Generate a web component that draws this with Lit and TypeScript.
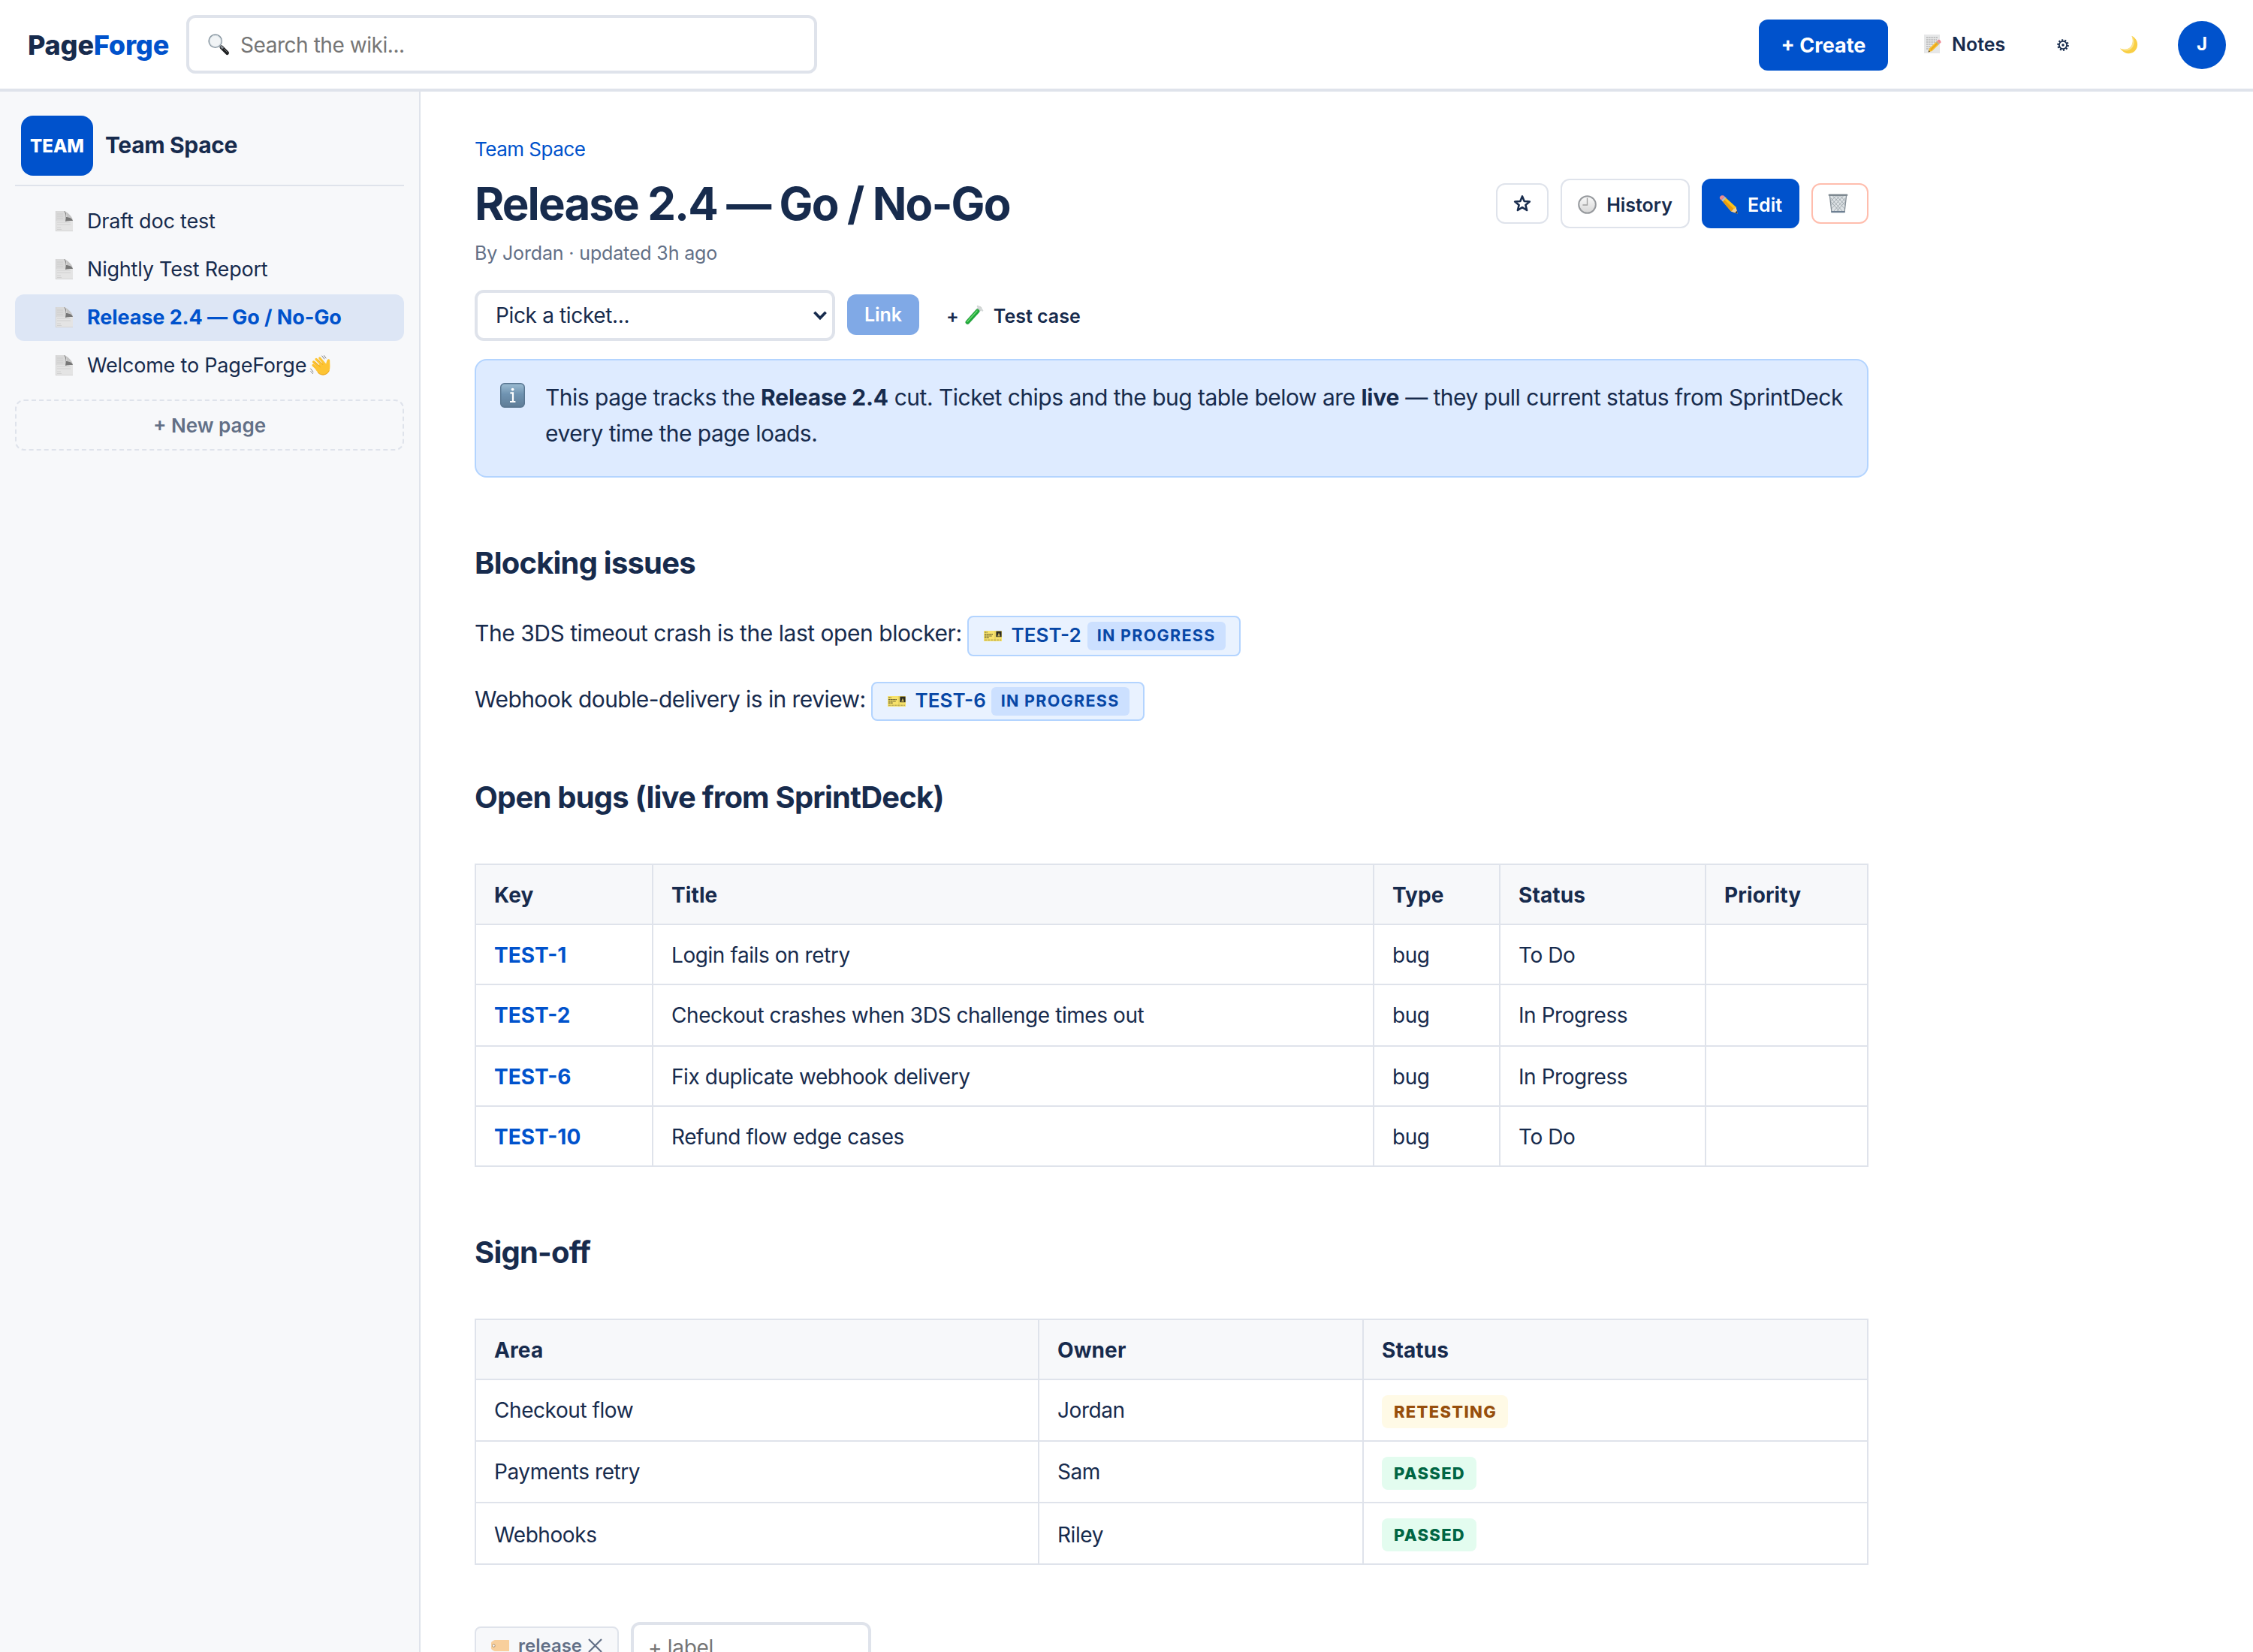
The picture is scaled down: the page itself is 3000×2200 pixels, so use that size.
import { LitElement, html, css, svg, nothing } from "lit";
import { customElement, property } from "lit/decorators.js";
import { classMap } from "lit/directives/class-map.js";

const pages = [
  { title: "Draft doc test" },
  { title: "Nightly Test Report" },
  { title: "Release 2.4 — Go / No-Go", active: true },
  { title: "Welcome to PageForge", wave: true },
];

const bugs = [
  { key: "TEST-1", title: "Login fails on retry", status: "To Do" },
  { key: "TEST-2", title: "Checkout crashes when 3DS challenge times out", status: "In Progress" },
  { key: "TEST-6", title: "Fix duplicate webhook delivery", status: "In Progress" },
  { key: "TEST-10", title: "Refund flow edge cases", status: "To Do" },
];

const signoff = [
  { area: "Checkout flow", owner: "Jordan", status: "Retesting" },
  { area: "Payments retry", owner: "Sam", status: "Passed" },
  { area: "Webhooks", owner: "Riley", status: "Passed" },
];

const icons: Record<string, { w: number; h: number; body: unknown }> = {
  search: {
    w: 28,
    h: 28,
    body: svg`
      <path d="M18 18 L25.5 25.5" stroke="#1c1e20" stroke-width="5" stroke-linecap="round" />
      <path d="M17 16.5 L20 19.5" stroke="#8a9097" stroke-width="3" />
      <path d="M21 20 L25.5 24.4" stroke="#777" stroke-width="1" stroke-linecap="round" />
      <circle cx="9.7" cy="9.7" r="8.6" fill="#f1f4f6" stroke="#8795a0" stroke-width="1.5" />
      <circle cx="9.7" cy="9.7" r="7.4" fill="none" stroke="#d7dfe4" stroke-width="1" />
    `,
  },
  doc: {
    w: 23,
    h: 27,
    body: svg`
      <path d="M0 0 H13 L23 12 V27 H0 Z" fill="#e4e4e4" />
      <path d="M0 0 H13 L14 13 H0 Z" fill="#d9d9d9" />
      <path d="M11 0 C15 1 14 6 14 8 C18 8 22 9 23 13 C20 13 15 13 13 14 C14 9 14 3 11 0 Z" fill="#777" />
      <path d="M12.5 0.5 C18 3 22 8 23 12 C21 9 18 8 14.5 8 C14.5 5 14.5 2 12.5 0.5 Z" fill="#c4c4c4" />
      <path d="M2 4 H10 M2 7 H10 M2 10 H10 M2 15 H20 M2 18 H20 M2 22 H7 M2 24.5 H8" stroke="#cacaca" stroke-width="0.8" />
      <path d="M0.4 0 V27 M0 26.6 H23" stroke="#cfcfcf" stroke-width="0.8" />
    `,
  },
  wave: {
    w: 27,
    h: 27,
    body: svg`
      <path d="M4 13.4 L12 21 M4.6 9 L14 18.4" stroke="#fcc02e" stroke-width="3.2" stroke-linecap="round" />
      <path d="M8 5.4 L17 15 M12.8 4 L20 12.6" stroke="#fdc636" stroke-width="3.2" stroke-linecap="round" />
      <path d="M8.4 14.6 L17.4 9.4 L20.8 13 C21.4 10.6 21.8 8 22.8 6.2 C23.8 4.8 26.2 5.2 26.2 7 C26 10 26.8 14 26.2 18 C25.4 23 21.8 26.2 17.4 26.4 C13 26.4 10 23 7.4 19.6 Z" fill="#fdc433" />
      <path d="M6.6 9 L13.4 15.6 M10.6 6 L16.6 12.4" stroke="#e29a17" stroke-width="0.8" stroke-linecap="round" />
      <path d="M10 23 C14 27.4 22 27.4 25.4 20.5" fill="none" stroke="#e9a31c" stroke-width="1" />
      <path d="M15.8 1 L18.8 5 M18.6 0.6 L21 4 M0.6 18 L4 22.2 M0.8 21.6 L3.6 24.6" fill="none" stroke="#7d7d80" stroke-width="1" stroke-linecap="round" />
    `,
  },
  info: {
    w: 33,
    h: 33,
    body: svg`
      <defs>
        <linearGradient id="info-bg" x1="0" y1="0" x2="0" y2="1">
          <stop offset="0" stop-color="#9dbdd3" />
          <stop offset="0.45" stop-color="#6f93b1" />
          <stop offset="1" stop-color="#5f7c96" />
        </linearGradient>
      </defs>
      <rect x="0.7" y="0.7" width="31.6" height="31.6" rx="5" fill="url(#info-bg)" stroke="#587590" stroke-width="1.4" />
      <path d="M13.4 13.4 H17 V24.6 M13 25 H20.4" fill="none" stroke="#fff" stroke-width="2.2" />
      <circle cx="16.6" cy="8.6" r="1.9" fill="#fff" />
    `,
  },
  memo: {
    w: 23,
    h: 25,
    body: svg`
      <rect x="0" y="0" width="21" height="25" fill="#e6e7e8" />
      <path d="M3 4 H18 M3 7 H17 M3 10 H15 M3 13 H12 M3 16 H9 M3 19 H7" stroke="#9c9c9c" stroke-width="1" stroke-dasharray="2.4 0.8" />
      <path d="M5.6 23.4 L7 18.4 L17.4 8.4 L21 12 L10.6 22 Z" fill="#f6bb2a" />
      <path d="M8.8 20.4 L19.2 10.2" stroke="#d98f12" stroke-width="1" />
      <path d="M17.4 8.4 L19.2 6.8 C20.8 6.4 22.8 8.4 22.4 10.4 L21 12 Z" fill="#ee8690" />
      <path d="M16.4 9.4 L20 13" stroke="#a9b0b8" stroke-width="1.4" />
      <path d="M5.6 23.4 L6.3 21 L8 22.7 Z" fill="#4b3a24" />
    `,
  },
  gear: {
    w: 16,
    h: 16,
    body: svg`
      <circle cx="8" cy="8" r="6.7" fill="none" stroke="#172b4d" stroke-width="2.2" stroke-dasharray="2.1 2.11" />
      <circle cx="8" cy="8" r="5.1" fill="none" stroke="#172b4d" stroke-width="1.8" />
      <circle cx="8" cy="8" r="1.7" fill="#172b4d" />
    `,
  },
  moon: {
    w: 25,
    h: 26,
    body: svg`
      <path d="M16.4 0.8 C23 4 25.6 10.6 23.4 16.6 C20.6 24.6 9.4 28.4 1 17.4 C6.6 20 12.6 19 15.6 14.8 C18.4 10.6 18.6 5.4 16.4 0.8 Z" fill="#f9cf45" />
      <path d="M1 17.4 C6.6 20 12.6 19 15.6 14.8 C18.4 10.6 18.6 5.4 16.4 0.8 C20.6 5.6 20.6 11.4 17.6 16 C13.4 21.6 6.2 21.6 1 17.4 Z" fill="#fbe48d" />
    `,
  },
  star: {
    w: 24,
    h: 24,
    body: svg`
      <path d="M12 2.4 L14.7 9 L21.8 9.5 L16.4 14 L18.1 21 L12 17.2 L5.9 21 L7.6 14 L2.2 9.5 L9.3 9 Z" fill="none" stroke="#172b4d" stroke-width="2.6" stroke-linejoin="round" />
    `,
  },
  clock: {
    w: 25,
    h: 25,
    body: svg`
      <defs>
        <linearGradient id="clock-face" x1="0" y1="0" x2="0" y2="1">
          <stop offset="0" stop-color="#fbfbfb" />
          <stop offset="1" stop-color="#d6d6d6" />
        </linearGradient>
      </defs>
      <circle cx="12.5" cy="12.5" r="11.3" fill="url(#clock-face)" stroke="#96999d" stroke-width="2" />
      <path d="M12.5 3.4 V13 H6.4" fill="none" stroke="#a0a0a0" stroke-width="1.4" />
    `,
  },
  pencil: {
    w: 25,
    h: 25,
    body: svg`
      <path d="M4.2 7.4 L8.6 3 L22.4 15.6 L24.6 24.4 L16 21.4 Z" fill="#fcc21b" />
      <path d="M4.2 7.4 L6.4 5.2 L20 18.4 L16 21.4 Z" fill="#e89b10" />
      <path d="M16 21.4 C18 20.8 18.6 20.2 18.8 18.6 C20.8 18.2 21.8 17.4 22.4 15.6 L24.6 24.4 Z" fill="#efcf9c" />
      <path d="M24.6 24.4 L21.2 23.2 L23.7 20.8 Z" fill="#3a3530" />
      <path d="M3 6.6 L7.6 1.8 L9.6 3.6 L5 8.4 Z" fill="#b6bdc4" />
      <path d="M3 6.6 L7.6 1.8 C5.6 -0.4 3 0.2 1.6 1.6 C0.2 3 0.6 5 3 6.6 Z" fill="#f08a8f" />
    `,
  },
  trash: {
    w: 25,
    h: 26,
    body: svg`
      <path d="M1.4 2.4 H23.6 L21 25 H4 Z" fill="#dde2e5" />
      <path d="M3 6 L19 24 M2.4 10 L15 24 M5 2.4 L21.4 20 M10 2.4 L22 15.6 M15 2.4 L22.6 10.4 M22 6 L6 24 M22.6 10 L10 24 M20 2.4 L3.6 20 M15 2.4 L3 15.6 M10 2.4 L2.4 10.4" stroke="#969ea4" stroke-width="0.8" />
      <path d="M1.4 2.4 L4 25 M23.6 2.4 L21 25" stroke="#838d95" stroke-width="1.3" />
      <path d="M0.8 1.8 H24.2" stroke="#7d8890" stroke-width="2.4" stroke-linecap="round" />
      <path d="M4.2 24.2 H20.8" stroke="#6d7f92" stroke-width="2.2" stroke-linecap="round" />
    `,
  },
  tube: {
    w: 25,
    h: 26,
    body: svg`
      <path d="M20.4 4 L4.4 22" stroke="#c9cfcc" stroke-width="6" stroke-linecap="round" />
      <path d="M17.6 7.4 L4.4 22" stroke="#1fa83a" stroke-width="5.4" stroke-linecap="round" />
      <path d="M17 7 L4 21.4" stroke="#6fdc74" stroke-width="1.4" stroke-linecap="round" />
      <path d="M18 1 L24 6.4" stroke="#d4d8d8" stroke-width="2.6" stroke-linecap="round" />
    `,
  },
  ticket: {
    w: 24,
    h: 14,
    body: svg`
      <rect width="24" height="14" rx="0.6" fill="#f7e26b" />
      <path d="M1 2 H5 M1 4.6 H12 M1 7 H11 M1 9.2 H7" stroke="#6a6232" stroke-width="1.2" stroke-dasharray="2.6 0.5" />
      <path d="M1 12.2 H23" stroke="#a3964a" stroke-width="1" stroke-dasharray="3 1" />
      <path d="M15 0 V14" stroke="#cdb94c" stroke-width="0.6" />
      <rect x="16.4" y="0.6" width="7.2" height="7.6" fill="#2a2a22" />
      <path d="M18 7.4 L20 2.4 L22 7.4 Z" fill="#c6b457" />
    `,
  },
  tag: {
    w: 24,
    h: 15,
    body: svg`
      <path d="M5 0 H23.4 Q24 0 24 0.6 V14.4 Q24 15 23.4 15 H5 C2.6 14.4 0 12.4 0 11 V4 C0 2.6 2.6 0.6 5 0 Z" fill="#f8cf9c" />
      <circle cx="3.4" cy="7.6" r="1.8" fill="#fff" stroke="#a98c6b" stroke-width="1" />
    `,
  },
  chevron: {
    w: 20,
    h: 14,
    body: svg`<path d="M2.4 2.8 L10 10.6 L17.6 2.8" fill="none" stroke="#172b4d" stroke-width="3.6" />`,
  },
  close: {
    w: 19,
    h: 19,
    body: svg`<path d="M1 1 L18 18 M18 1 L1 18" stroke="#626f86" stroke-width="2.2" />`,
  },
};

@customElement("pf-icon")
export class PfIcon extends LitElement {
  static styles = css`
    :host {
      display: inline-flex;
      flex: none;
    }

    svg {
      display: block;
      overflow: visible;
    }
  `;

  @property() name = "doc";

  render() {
    const { w, h, body } = icons[this.name];
    return html`<svg width=${w} height=${h} viewBox="0 0 ${w} ${h}" fill="none">${body}</svg>`;
  }
}

@customElement("pf-header")
export class PfHeader extends LitElement {
  static styles = css`
    :host {
      display: flex;
      align-items: center;
      box-sizing: border-box;
      height: 122px;
      padding: 0 36px 0 37px;
      background: #fff;
      border-bottom: 4px solid var(--line);
    }

    .logo {
      width: 187px;
      margin-right: 24px;
      padding-top: 2px;
      font-size: 36px;
      font-weight: 800;
      letter-spacing: -0.2px;
      white-space: nowrap;
    }

    .logo span {
      color: var(--blue);
    }

    .search {
      display: flex;
      align-items: center;
      gap: 15px;
      box-sizing: border-box;
      width: 840px;
      height: 78px;
      padding: 0 25px;
      border: 4px solid var(--line);
      border-radius: 12px;
      font-size: 28px;
      letter-spacing: -0.45px;
      color: #757575;
    }

    .search span {
      padding-top: 2px;
    }

    .actions {
      display: flex;
      align-items: center;
      margin-left: auto;
      padding-top: 2px;
      font-size: 25px;
      font-weight: 600;
    }

    .create {
      display: flex;
      align-items: center;
      justify-content: center;
      width: 172px;
      height: 68px;
      margin-right: 48px;
      border-radius: 12px;
      background: var(--blue);
      color: #fff;
      font-size: 27px;
      font-weight: 700;
    }

    .notes {
      display: flex;
      align-items: center;
      gap: 14px;
      width: 177px;
      margin-bottom: 3px;
    }

    .gear {
      width: 83px;
    }

    .moon {
      width: 78px;
    }

    .avatar {
      display: flex;
      align-items: center;
      justify-content: center;
      box-sizing: border-box;
      width: 64px;
      height: 64px;
      padding-bottom: 4px;
      border-radius: 50%;
      background: var(--blue);
      color: #fff;
      font-size: 24px;
      font-weight: 700;
    }
  `;

  render() {
    return html`
      <div class="logo">Page<span>Forge</span></div>
      <div class="search"><pf-icon name="search"></pf-icon><span>Search the wiki...</span></div>
      <div class="actions">
        <div class="create">+ Create</div>
        <div class="notes"><pf-icon name="memo"></pf-icon>Notes</div>
        <pf-icon class="gear" name="gear"></pf-icon>
        <pf-icon class="moon" name="moon"></pf-icon>
        <div class="avatar">J</div>
      </div>
    `;
  }
}

@customElement("pf-sidebar")
export class PfSidebar extends LitElement {
  static styles = css`
    :host {
      display: block;
      box-sizing: border-box;
      width: 560px;
      padding: 20px;
      background: var(--surface);
      border-right: 2px solid var(--line);
    }

    .space {
      display: flex;
      align-items: center;
      gap: 16px;
      padding: 12px 8px;
      margin-bottom: 16px;
      border-bottom: 2px solid var(--line);
      font-size: 30px;
      font-weight: 700;
      letter-spacing: -0.35px;
    }

    .space span {
      padding-bottom: 2px;
    }

    .badge {
      display: flex;
      align-items: center;
      justify-content: center;
      width: 96px;
      height: 80px;
      border-radius: 16px;
      background: var(--blue);
      color: #fff;
      font-size: 24px;
      font-weight: 800;
      letter-spacing: 0;
    }

    nav {
      display: flex;
      flex-direction: column;
      gap: 2px;
    }

    .item {
      display: flex;
      align-items: center;
      box-sizing: border-box;
      height: 62px;
      padding: 0 0 2px 54px;
      border-radius: 12px;
      font-size: 27px;
      letter-spacing: -0.2px;
    }

    .item.active {
      background: rgba(0, 82, 204, 0.1);
      color: var(--blue);
      font-weight: 700;
      letter-spacing: -0.1px;
    }

    .item span {
      padding: 0 5px 0 19px;
    }

    .new {
      display: flex;
      align-items: center;
      justify-content: center;
      box-sizing: border-box;
      height: 68px;
      margin-top: 14px;
      border: 2px dashed var(--line);
      border-radius: 12px;
      color: var(--muted);
      font-size: 26px;
      font-weight: 600;
    }
  `;

  render() {
    return html`
      <div class="space"><div class="badge">TEAM</div><span>Team Space</span></div>
      <nav>
        ${pages.map(
          (page) => html`
            <div class=${classMap({ item: true, active: !!page.active })}>
              <pf-icon name="doc"></pf-icon>
              <span>${page.title}</span>
              ${page.wave ? html`<pf-icon name="wave"></pf-icon>` : nothing}
            </div>
          `
        )}
      </nav>
      <div class="new">+ New page</div>
    `;
  }
}

@customElement("pf-ticket")
export class PfTicket extends LitElement {
  static styles = css`
    :host {
      display: flex;
      align-items: center;
      box-sizing: border-box;
      width: 364px;
      height: 54px;
      padding: 0 18px 0 20px;
      border: 2px solid #b3d4ff;
      border-radius: 8px;
      background: #e9f2ff;
      color: #0747a6;
      font-size: 26px;
      font-weight: 600;
      letter-spacing: 0;
      white-space: nowrap;
    }

    .key {
      flex: 1;
      padding: 0 0 3px 13px;
    }

    .status {
      box-sizing: border-box;
      width: 184px;
      height: 38px;
      line-height: 37px;
      border-radius: 6px;
      background: #cce0ff;
      text-align: center;
      font-size: 21.5px;
      font-weight: 700;
      letter-spacing: 1.3px;
      text-transform: uppercase;
    }
  `;

  @property() key = "";

  render() {
    return html`
      <pf-icon name="ticket"></pf-icon>
      <span class="key">${this.key}</span>
      <span class="status">In Progress</span>
    `;
  }
}

@customElement("app-root")
export class AppRoot extends LitElement {
  static styles = css`
    :host {
      --blue: #0052cc;
      --text: #172b4d;
      --muted: #626f86;
      --line: #dfe3eb;
      --surface: #f7f8fa;
      display: block;
      width: 3000px;
      height: 2200px;
      overflow: hidden;
      background: #fff;
      color: var(--text);
      font-family: Inter, "Liberation Sans", sans-serif;
    }

    .body {
      display: flex;
      height: 2078px;
    }

    main {
      width: 1856px;
      padding: 56px 0 0 72px;
    }

    .crumb {
      height: 41px;
      line-height: 41px;
      color: var(--blue);
      font-size: 26px;
      letter-spacing: -0.5px;
    }

    .title {
      display: flex;
      align-items: center;
      gap: 16px;
      height: 66px;
      margin-top: 19px;
    }

    h1 {
      flex: 1;
      margin: 0;
      font-size: 60px;
      line-height: 66px;
      font-weight: 700;
      letter-spacing: -1.9px;
    }

    .btn {
      display: flex;
      align-items: center;
      justify-content: center;
      gap: 13px;
      box-sizing: border-box;
      height: 66px;
      padding-top: 3px;
      border: 2px solid var(--line);
      border-radius: 12px;
      font-size: 25px;
      font-weight: 600;
    }

    .btn.star {
      width: 70px;
      height: 54px;
      padding: 0;
    }

    .btn.history {
      width: 172px;
    }

    .btn.edit {
      width: 130px;
      background: var(--blue);
      border-color: var(--blue);
      color: #fff;
    }

    .btn.trash {
      width: 76px;
      height: 54px;
      padding: 0 6px 0 0;
      border-color: #ffbdad;
    }

    .byline {
      height: 42px;
      margin-top: 11px;
      line-height: 44px;
      color: var(--muted);
      font-size: 25px;
      letter-spacing: -0.15px;
    }

    .tools {
      display: flex;
      align-items: center;
      height: 68px;
      margin-top: 29px;
      font-size: 25px;
      font-weight: 600;
    }

    .tools span {
      padding-top: 2px;
    }

    .select {
      display: flex;
      align-items: center;
      justify-content: space-between;
      box-sizing: border-box;
      width: 480px;
      height: 68px;
      padding: 0 6px 0 24px;
      border: 4px solid var(--line);
      border-radius: 12px;
      font-size: 28px;
      font-weight: 400;
      letter-spacing: -0.35px;
    }

    .link {
      width: 96px;
      height: 54px;
      margin: 0 36px 2px 16px;
      border-radius: 12px;
      background: #80a9e6;
      color: #fff;
      line-height: 54px;
      text-align: center;
    }

    .tools pf-icon[name="tube"] {
      margin: 0 14px 0 7px;
    }

    .callout {
      display: flex;
      gap: 27px;
      box-sizing: border-box;
      height: 158px;
      margin-top: 24px;
      padding: 26px 24px 0 32px;
      border: 2px solid #b3d4ff;
      border-radius: 16px;
      background: #deebff;
      font-size: 30px;
      line-height: 48px;
      letter-spacing: -0.51px;
    }

    .callout b {
      letter-spacing: -0.2px;
    }

    .callout pf-icon {
      margin-top: 4px;
    }

    .callout div {
      flex: 1;
      margin-top: -1px;
    }

    h2 {
      height: 64px;
      margin: 82px 0 0;
      font-size: 40px;
      line-height: 64px;
      font-weight: 700;
      letter-spacing: -0.8px;
    }

    p {
      display: flex;
      align-items: flex-start;
      gap: 7px;
      height: 48px;
      margin: 37px 0 0;
      font-size: 30px;
      line-height: 48px;
      letter-spacing: -0.46px;
    }

    p + p {
      margin-top: 40px;
      letter-spacing: -0.57px;
    }

    p + h2 {
      margin-top: 75px;
    }

    p pf-ticket {
      margin-top: 1px;
    }

    p + p pf-ticket {
      height: 52px;
    }

    table {
      width: 1856px;
      margin-top: 56px;
      table-layout: fixed;
      border-spacing: 0;
      border-top: 2px solid var(--line);
      border-left: 2px solid var(--line);
      font-size: 28px;
    }

    th,
    td {
      box-sizing: border-box;
      height: 80px;
      padding: 2px 0 0 24px;
      border-right: 2px solid var(--line);
      border-bottom: 2px solid var(--line);
      line-height: 76px;
      text-align: left;
      vertical-align: top;
    }

    th {
      background: var(--surface);
      font-weight: 700;
      letter-spacing: 0.1px;
    }

    td {
      letter-spacing: -0.43px;
    }

    .bugs tr:nth-child(2) td,
    .signoff td {
      height: 82px;
    }

    .signoff tr:last-child td {
      padding-top: 4px;
    }

    td.key {
      color: var(--blue);
      font-weight: 700;
      letter-spacing: 0;
    }

    .signoff tr td.state,
    .signoff tr:last-child td.state {
      padding-top: 20px;
    }

    .lozenge {
      display: block;
      width: fit-content;
      height: 44px;
      padding: 0 15px 0 16px;
      border-radius: 8px;
      font-size: 22px;
      font-weight: 800;
      line-height: 44px;
      letter-spacing: 1.3px;
      text-transform: uppercase;
    }

    .lozenge.passed {
      background: #e3fcef;
      color: #006644;
    }

    .lozenge.retesting {
      background: #fffae6;
      color: #974f0c;
    }

    .labels {
      display: flex;
      align-items: flex-start;
      gap: 16px;
      margin-top: 76px;
    }

    .label {
      display: flex;
      align-items: center;
      box-sizing: border-box;
      width: 192px;
      height: 54px;
      margin-top: 6px;
      padding: 0 0 3px 20px;
      border: 2px solid var(--line);
      border-radius: 8px;
      background: var(--surface);
      color: var(--muted);
      font-size: 24px;
      font-weight: 600;
    }

    .label span {
      padding: 0 8px 0 12px;
    }

    .add {
      box-sizing: border-box;
      width: 320px;
      height: 68px;
      padding-left: 19px;
      border: 4px solid var(--line);
      border-radius: 12px;
      color: #757575;
      font-size: 28px;
      letter-spacing: -0.3px;
      line-height: 60px;
    }
  `;

  renderBugs() {
    return html`
      <table class="bugs">
        <colgroup>
          <col width="236" />
          <col width="960" />
          <col width="168" />
          <col width="274" />
          <col width="216" />
        </colgroup>
        <thead>
          <tr>
            ${["Key", "Title", "Type", "Status", "Priority"].map((name) => html`<th>${name}</th>`)}
          </tr>
        </thead>
        <tbody>
          ${bugs.map(
            (bug) => html`
              <tr>
                <td class="key">${bug.key}</td>
                <td>${bug.title}</td>
                <td>bug</td>
                <td>${bug.status}</td>
                <td></td>
              </tr>
            `
          )}
        </tbody>
      </table>
    `;
  }

  renderSignoff() {
    return html`
      <table class="signoff">
        <colgroup>
          <col width="750" />
          <col width="432" />
          <col width="672" />
        </colgroup>
        <thead>
          <tr>
            ${["Area", "Owner", "Status"].map((name) => html`<th>${name}</th>`)}
          </tr>
        </thead>
        <tbody>
          ${signoff.map(
            (row) => html`
              <tr>
                <td>${row.area}</td>
                <td>${row.owner}</td>
                <td class="state">
                  <span class="lozenge ${row.status.toLowerCase()}">${row.status}</span>
                </td>
              </tr>
            `
          )}
        </tbody>
      </table>
    `;
  }

  render() {
    return html`
      <pf-header></pf-header>
      <div class="body">
        <pf-sidebar></pf-sidebar>
        <main>
          <div class="crumb">Team Space</div>
          <div class="title">
            <h1>Release 2.4 — Go / No-Go</h1>
            <div class="btn star"><pf-icon name="star"></pf-icon></div>
            <div class="btn history"><pf-icon name="clock"></pf-icon>History</div>
            <div class="btn edit"><pf-icon name="pencil"></pf-icon>Edit</div>
            <div class="btn trash"><pf-icon name="trash"></pf-icon></div>
          </div>
          <div class="byline">By Jordan · updated 3h ago</div>
          <div class="tools">
            <div class="select">Pick a ticket...<pf-icon name="chevron"></pf-icon></div>
            <div class="link">Link</div>
            <span>+</span><pf-icon name="tube"></pf-icon><span>Test case</span>
          </div>
          <div class="callout">
            <pf-icon name="info"></pf-icon>
            <div>
              This page tracks the <b>Release 2.4</b> cut. Ticket chips and the bug table below are
              <b>live</b> — they pull current status from SprintDeck every time the page loads.
            </div>
          </div>
          <h2>Blocking issues</h2>
          <p>The 3DS timeout crash is the last open blocker: <pf-ticket key="TEST-2"></pf-ticket></p>
          <p>Webhook double-delivery is in review: <pf-ticket key="TEST-6"></pf-ticket></p>
          <h2>Open bugs (live from SprintDeck)</h2>
          ${this.renderBugs()}
          <h2>Sign-off</h2>
          ${this.renderSignoff()}
          <div class="labels">
            <div class="label">
              <pf-icon name="tag"></pf-icon><span>release</span><pf-icon name="close"></pf-icon>
            </div>
            <div class="add">+ label</div>
          </div>
        </main>
      </div>
    `;
  }
}
